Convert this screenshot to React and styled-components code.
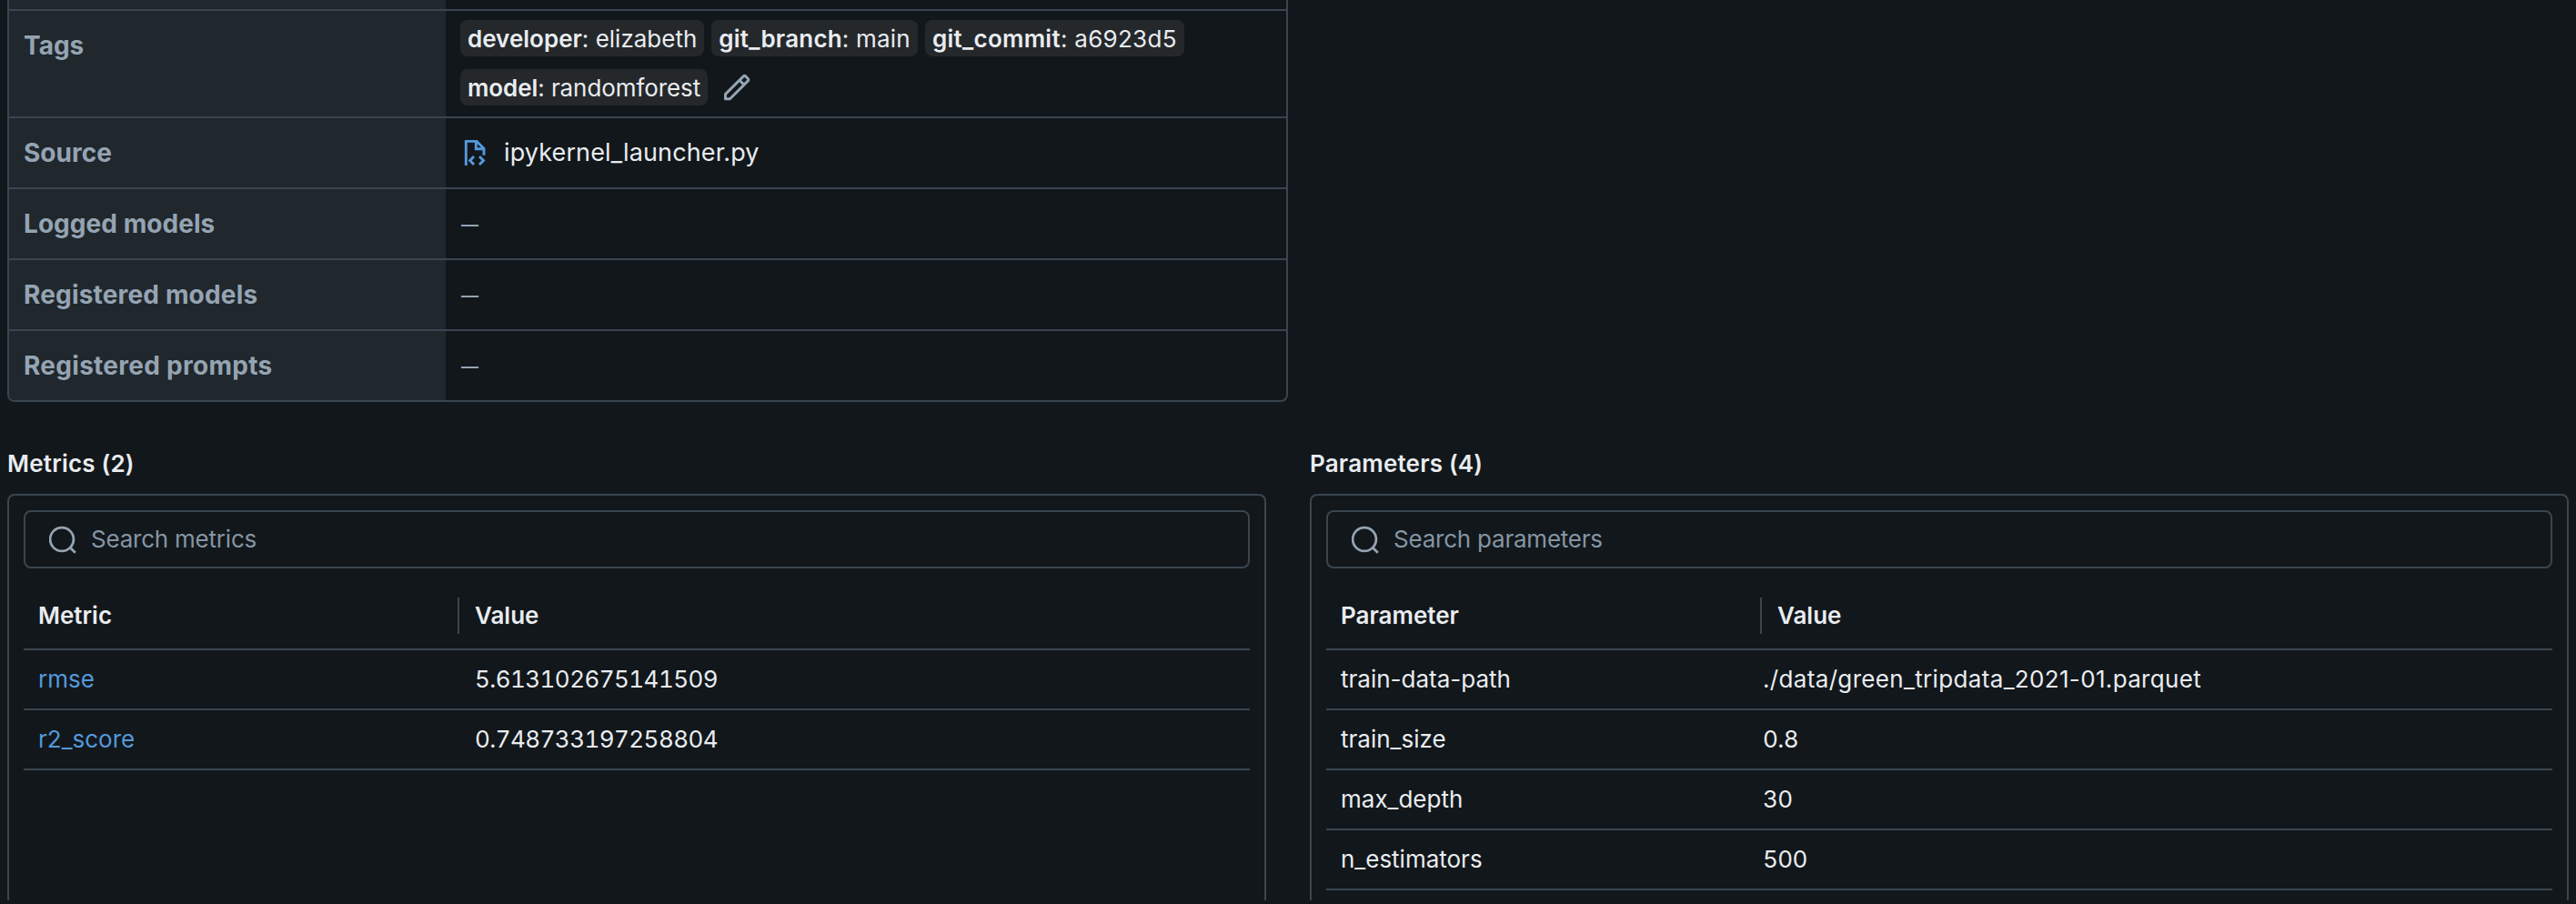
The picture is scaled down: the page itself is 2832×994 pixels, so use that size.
import React from 'react';
import styled, { createGlobalStyle } from 'styled-components';

const LINE = '#3a454f';
const MUTED = '#95a4b2';
const LINK = '#5499dc';

const Global = createGlobalStyle`
  * { box-sizing: border-box; }
  html, body { margin: 0; background: #12171b; }
  body {
    font-family: Inter, "Liberation Sans", sans-serif; font-size: 26px; line-height: 40px;
    color: #e9ecf0; overflow: hidden;
  }
  svg { flex: none; display: block; }
`;
const Page = styled.main`
  width: 2832px; height: 994px; overflow: hidden;
  display: flex; flex-direction: column;
`;
const Details = styled.section`
  flex: none; width: 1408px; margin-left: 8px;
  border: 2px solid ${LINE}; border-top: 0;
  border-radius: 0 0 8px 8px; overflow: hidden;
`;
const DetailRow = styled.div`
  display: flex; height: ${p => p.$h}px;
  & + & { border-top: 2px solid ${LINE}; }
`;
const Label = styled.div`
  width: 480px; padding: ${p => (p.$empty ? 0 : '18px 16px')}; background: #20272d; color: ${MUTED};
  font-weight: 700; font-size: 28px; letter-spacing: ${p => p.$ls || 0}px;
`;
const Content = styled.div`
  flex: 1; display: flex; align-items: center; padding: 0 16px;
`;
const TagList = styled(Content)`
  flex-wrap: wrap; align-content: flex-start; gap: 14px 8px; padding-top: 10px;
`;
const Tag = styled.span`
  height: 40px; padding: 1px 8px 0; border-radius: 8px; background: #24282b;
  white-space: nowrap; letter-spacing: ${p => p.$ls || 0}px;
  b { font-weight: 600; }
`;
const EditButton = styled.span`margin-left: 8px; color: ${MUTED};`;
const FileLink = styled.span`
  display: flex; align-items: center; gap: 20px; padding-left: 4px;
  font-size: 27px; letter-spacing: 0.12px;
`;
const Dash = styled.span`
  font-size: 19px; font-weight: 600; color: ${MUTED}; padding: 4px 0 0 1px;
`;
const Columns = styled.div`
  flex: none; display: flex; gap: 48px; margin-left: 8px; padding-top: 48px;
`;
const Column = styled.section`width: 1384px;`;
const Title = styled.h2`
  margin: 0 0 13px; font-size: 26px; line-height: 40px; font-weight: 600; letter-spacing: 0.2px;
`;
const Panel = styled.div`
  height: 447px; border: 2px solid ${LINE}; border-bottom: 0;
  border-radius: 8px 8px 0 0; padding: 16px; overflow: hidden;
`;
const Search = styled.div`
  height: 64px; border: 2px solid ${LINE}; border-radius: 8px;
  display: flex; align-items: center; gap: 14px; padding-left: 26px;
  color: #8595a3; letter-spacing: -0.22px;
  svg { color: ${MUTED}; }
`;
const HeadRow = styled.div`
  display: flex; align-items: flex-start; height: 90px; padding-top: 32px;
  border-bottom: 2px solid ${LINE}; font-weight: 600;
`;
const Row = styled.div`
  display: flex; align-items: center; height: 66px; border-bottom: 2px solid ${LINE};
`;
const Name = styled.div`
  width: ${p => p.$w}px; padding-left: 16px; color: ${p => (p.$link ? LINK : 'inherit')};
`;
const Value = styled.div`
  padding-left: 16px;
  font-variant-numeric: ${p => (p.$numeric ? 'tabular-nums' : 'normal')};
  letter-spacing: ${p => (p.$numeric ? -0.57 : 0.34)}px;
`;
const HeadValue = styled.div`border-left: 2px solid ${LINE}; padding-left: 17px;`;

const SearchIcon = () => (
  <svg width="32" height="32" viewBox="0 0 32 32" fill="none" stroke="currentColor" strokeWidth="2.8">
    <circle cx="14" cy="16" r="12.9" />
    <path d="M22.5 24.5l6.3 6.3" />
  </svg>
);
const FileIcon = () => (
  <svg width="24" height="28" viewBox="0 0 24 28" fill="none" stroke={LINK} strokeWidth="2.9">
    <path d="M2.3 28V1.35H14L22 9.3V16.7M13.3 1.35V9.8H22" />
    <path d="M11 18l-4.3 4.5L11 27M17 18l4.5 4.5L17 27" />
  </svg>
);
const PencilIcon = () => (
  <svg width="32" height="32" viewBox="0 0 16 16" fill="currentColor" fillRule="evenodd">
    <path d="M13.487 1.513a1.75 1.75 0 0 0-2.474 0L1.22 11.306a.75.75 0 0 0-.22.53v2.5c0 .414.336.75.75.75h2.5a.75.75 0 0 0 .53-.22l9.793-9.793a1.75 1.75 0 0 0 0-2.475zm-1.414 1.06a.25.25 0 0 1 .354 0l1.086 1.086a.25.25 0 0 1 0 .354L12 5.525l-1.44-1.44zM9.5 5.146l-7 7v1.44h1.44l7-7z" />
  </svg>
);

function DataPanel({ title, placeholder, head, rows, nameWidth, link }) {
  return (
    <Column>
      <Title>{title}</Title>
      <Panel>
        <Search><SearchIcon />{placeholder}</Search>
        <HeadRow><Name $w={477}>{head}</Name><HeadValue>Value</HeadValue></HeadRow>
        {rows.map(([k, v]) => (
          <Row key={k}>
            <Name $w={nameWidth} $link={link}>{k}</Name>
            <Value $numeric={!Number.isNaN(Number(v))}>{v}</Value>
          </Row>
        ))}
      </Panel>
    </Column>
  );
}

const METRICS = [['rmse', '5.613102675141509'], ['r2_score', '0.748733197258804']];
const PARAMS = [
  ['train-data-path', './data/green_tripdata_2021-01.parquet'],
  ['train_size', '0.8'],
  ['max_depth', '30'],
  ['n_estimators', '500'],
];
const EMPTY_FIELDS = [['Logged models', 0.05], ['Registered models', 0.17], ['Registered prompts', 0.28]];

export default function App() {
  return (
    <>
      <Global />
      <Page>
        <Details>
          <DetailRow $h={10}><Label $empty /><Content /></DetailRow>
          <DetailRow $h={118}>
            <Label>Tags</Label>
            <TagList>
              <Tag><b>developer</b>: elizabeth</Tag>
              <Tag $ls={0.2}><b>git_branch</b>: main</Tag>
              <Tag $ls={0.28}><b>git_commit</b>: a6923d5</Tag>
              <Tag $ls={-0.08}><b>model</b>: randomforest</Tag>
              <EditButton><PencilIcon /></EditButton>
            </TagList>
          </DetailRow>
          <DetailRow $h={78}>
            <Label>Source</Label>
            <Content><FileLink><FileIcon />ipykernel_launcher.py</FileLink></Content>
          </DetailRow>
          {EMPTY_FIELDS.map(([label, spacing]) => (
            <DetailRow key={label} $h={78}>
              <Label $ls={spacing}>{label}</Label>
              <Content><Dash>—</Dash></Content>
            </DetailRow>
          ))}
        </Details>
        <Columns>
          <DataPanel title="Metrics (2)" placeholder="Search metrics" head="Metric" nameWidth={480} link rows={METRICS} />
          <DataPanel title="Parameters (4)" placeholder="Search parameters" head="Parameter" nameWidth={464} rows={PARAMS} />
        </Columns>
      </Page>
    </>
  );
}
